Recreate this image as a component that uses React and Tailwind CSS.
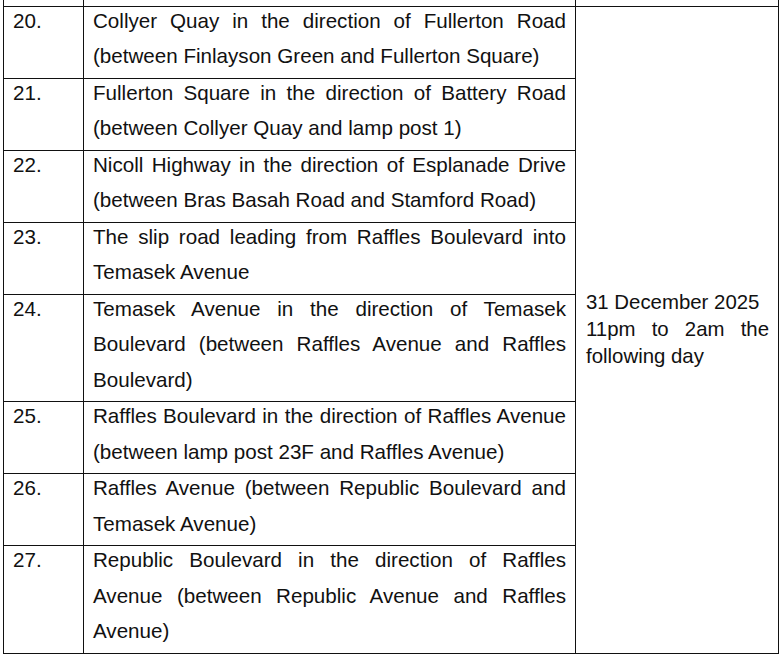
const rows = [
  ["20.", "Collyer Quay in the direction of Fullerton Road (between Finlayson Green and Fullerton Square)"],
  ["21.", "Fullerton Square in the direction of Battery Road (between Collyer Quay and lamp post 1)"],
  ["22.", "Nicoll Highway in the direction of Esplanade Drive (between Bras Basah Road and Stamford Road)"],
  ["23.", "The slip road leading from Raffles Boulevard into Temasek Avenue"],
  ["24.", "Temasek Avenue in the direction of Temasek Boulevard (between Raffles Avenue and Raffles Boulevard)"],
  ["25.", "Raffles Boulevard in the direction of Raffles Avenue (between lamp post 23F and Raffles Avenue)"],
  ["26.", "Raffles Avenue (between Republic Boulevard and Temasek Avenue)"],
  ["27.", "Republic Boulevard in the direction of Raffles Avenue (between Republic Avenue and Raffles Avenue)"],
];

const cell = "border border-[#111] align-top";

export default function App() {
  return (
    <div className="min-h-[655px] w-[781px] bg-white text-[#111] font-['Liberation_Sans',Arial,sans-serif] text-[20.6px]">
      <table className="ml-[3px] w-[775px] table-fixed border-collapse">
        <colgroup>
          <col className="w-[80px]" />
          <col className="w-[492px]" />
          <col className="w-[203px]" />
        </colgroup>
        <tbody>
          <tr className="h-[6px]">
            <td className="border-x border-b border-[#111] p-0" />
            <td className="border-x border-b border-[#111] p-0" />
            <td className="border-x border-b border-[#111] p-0" />
          </tr>
          {rows.map(([num, text], i) => (
            <tr key={num}>
              <td className={`${cell} px-[9px] leading-[35.5px]`}>
                <div className="-mt-[4px] mb-[4px]">{num}</div>
              </td>
              <td className={`${cell} px-[9px] leading-[35.5px]`}>
                <div className="-mt-[4px] mb-[4px] text-justify">{text}</div>
              </td>
              {i === 0 && (
                <td rowSpan={rows.length} className="border border-[#111] pl-[10px] pr-[9px] align-middle text-[20.4px] leading-[26.5px]">
                  <div className="-mt-[1px] mb-[1px]">31 December 2025</div>
                  <div className="text-justify">11pm to 2am the following day</div>
                </td>
              )}
            </tr>
          ))}
        </tbody>
      </table>
    </div>
  );
}
